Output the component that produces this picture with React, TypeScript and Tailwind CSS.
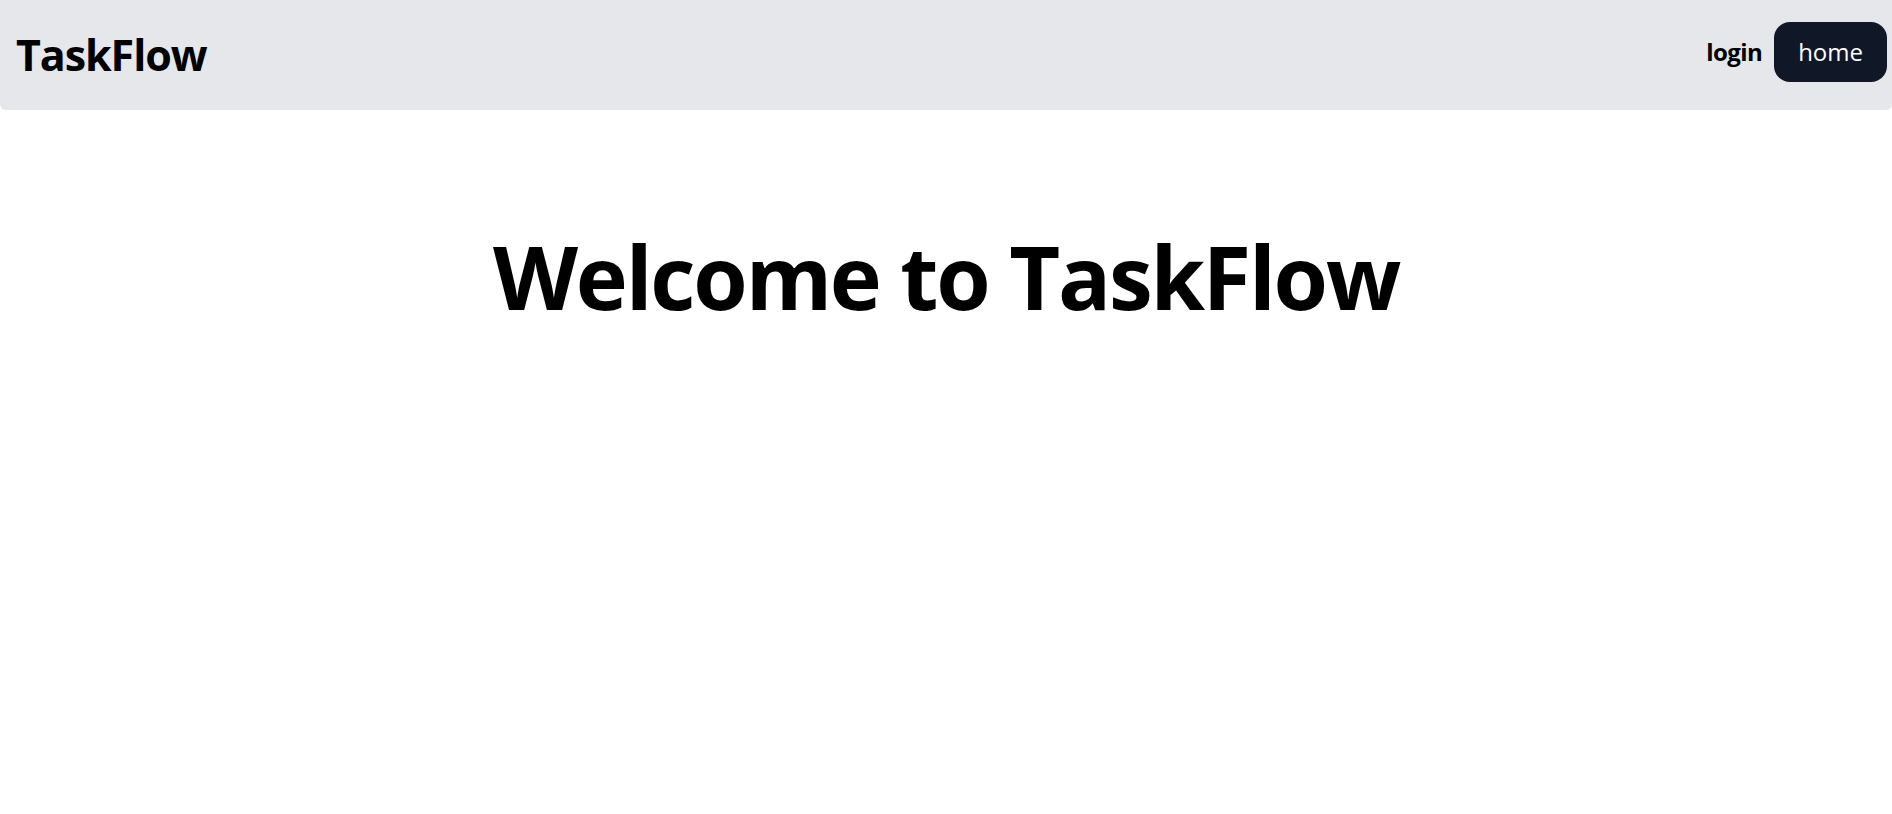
export default function App() {
  return (
    <div className="min-h-screen bg-white text-black font-['Open_Sans',sans-serif]">
      <header className="flex h-[110px] items-center justify-between rounded-b-md bg-gray-200 pl-4 pr-[5px]">
        <h1 className="text-[43px] font-bold tracking-tight">TaskFlow</h1>
        <nav className="mb-[7px] flex items-center gap-3">
          <a href="#" className="text-2xl font-bold tracking-tight">
            login
          </a>
          <button className="rounded-2xl bg-gray-900 px-6 py-3.5 text-2xl text-white">
            home
          </button>
        </nav>
      </header>
      <main className="mt-[122px] text-center">
        <h2 className="text-[88px] leading-none font-bold tracking-tight">
          Welcome to TaskFlow
        </h2>
      </main>
    </div>
  );
}
